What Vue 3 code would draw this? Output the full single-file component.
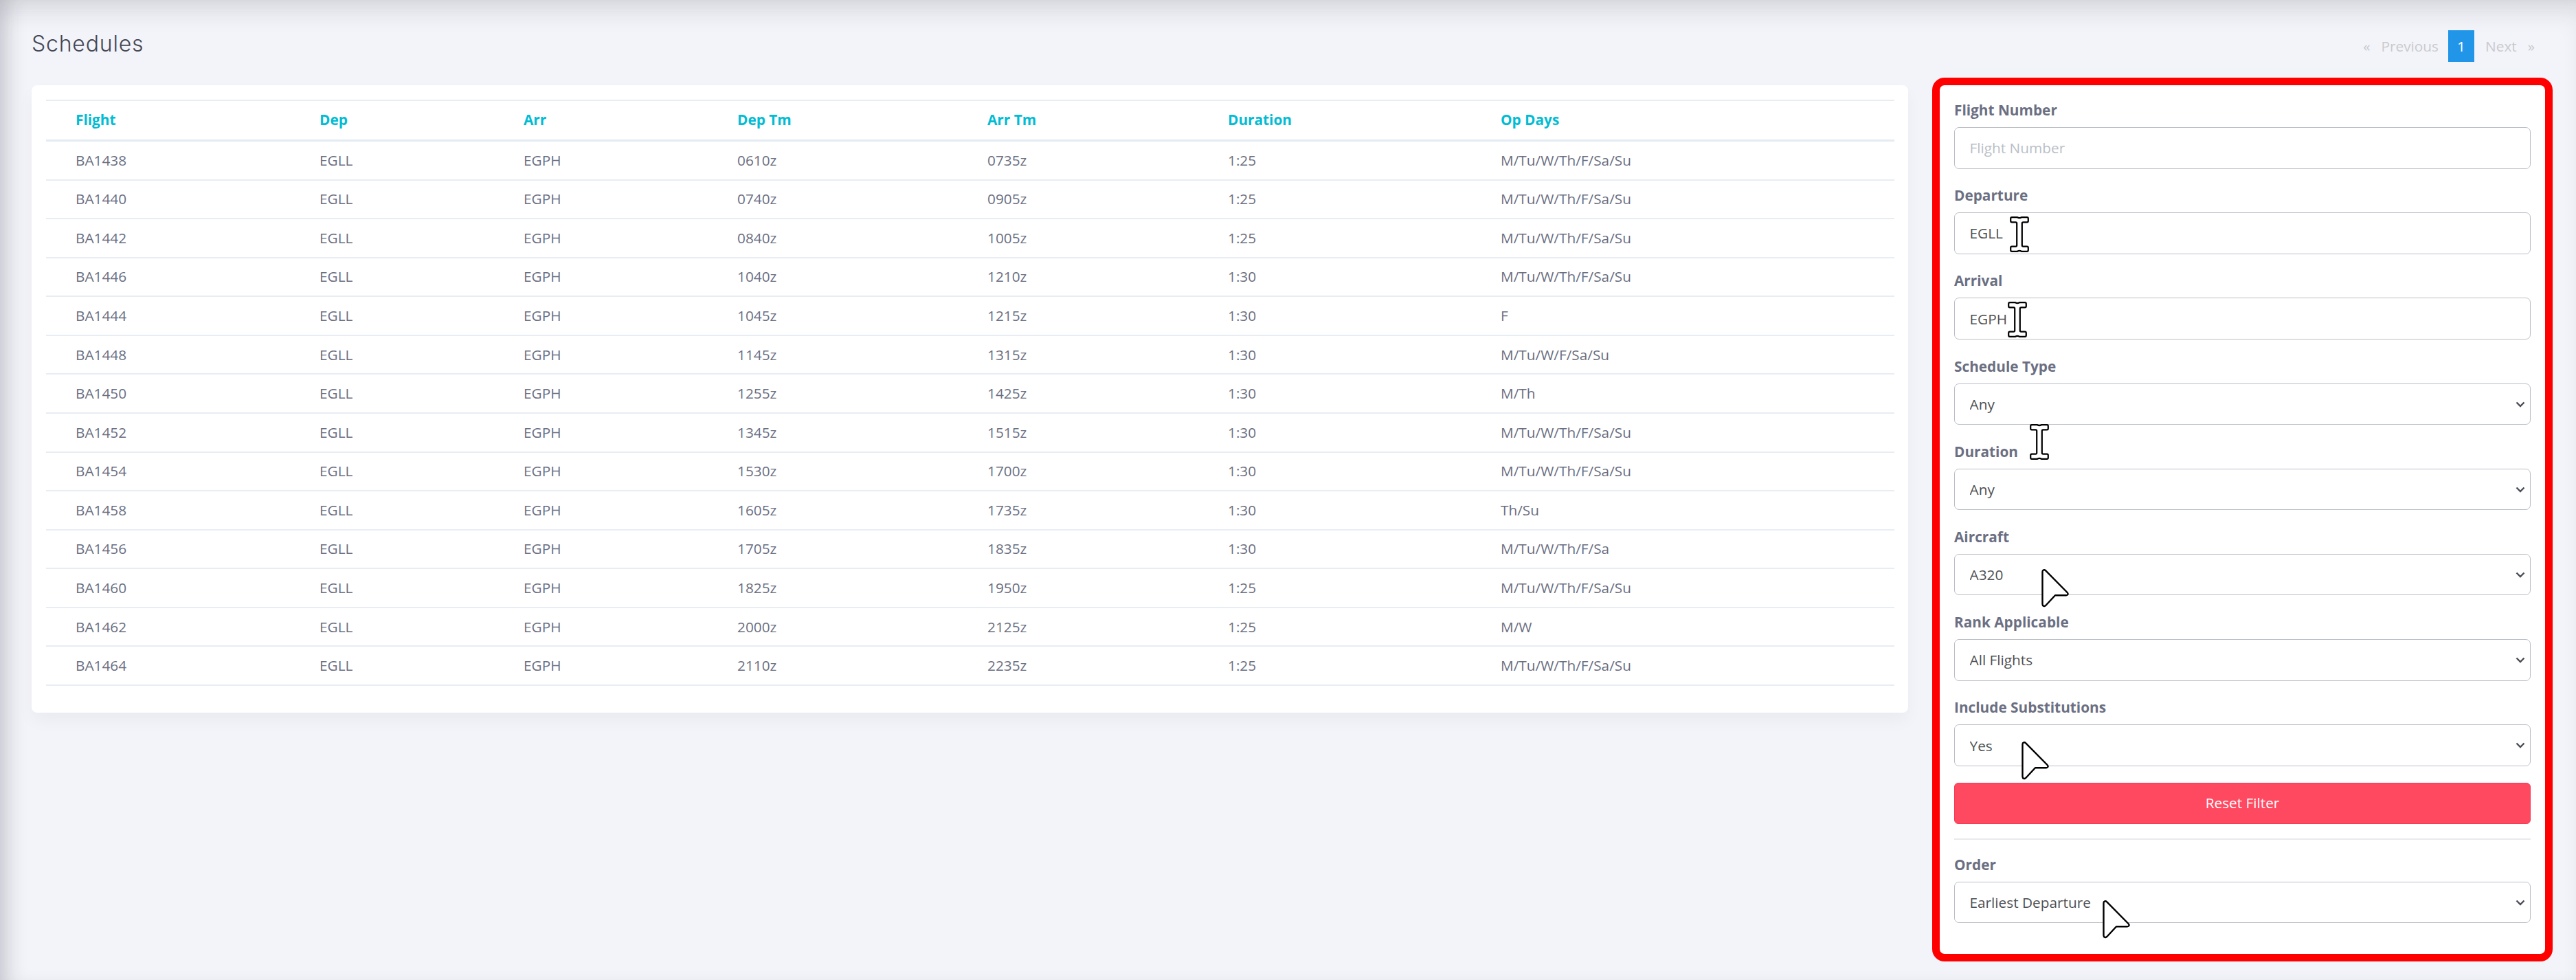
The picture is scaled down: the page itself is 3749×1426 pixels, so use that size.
<template>
  <div class="page">
    <div class="page-header">
      <h3 class="title">Schedules</h3>
      <div class="pagination">
        <span class="page-link prev"><span>«</span><span>Previous</span></span>
        <span class="page-num">1</span>
        <span class="page-link next"><span>Next</span><span>»</span></span>
      </div>
    </div>

    <div class="content">
      <div class="table-card">
        <table class="schedule-table">
          <colgroup>
            <col v-for="w in colWidths" :key="w" :width="w" />
          </colgroup>
          <thead>
            <tr>
              <th v-for="h in headers" :key="h">{{ h }}</th>
            </tr>
          </thead>
          <tbody>
            <tr v-for="row in schedules" :key="row[0]">
              <td>{{ row[0] }}</td>
              <td>EGLL</td>
              <td>EGPH</td>
              <td>{{ row[1] }}</td>
              <td>{{ row[2] }}</td>
              <td>{{ row[3] }}</td>
              <td>{{ row[4] }}</td>
            </tr>
          </tbody>
        </table>
      </div>

      <div class="filter-card">
        <div v-for="f in filters" :key="f.label" class="field">
          <label>{{ f.label }}</label>
          <input v-if="f.type === 'input'" class="control" :value="f.value" :placeholder="f.placeholder" />
          <div v-else class="select-wrap">
            <select class="control">
              <option>{{ f.value }}</option>
            </select>
            <svg class="chevron" width="14" height="9" viewBox="0 0 14 9">
              <path d="M1.5 1.5 L7 7 L12.5 1.5" fill="none" stroke="#4a4d55" stroke-width="2.4" />
            </svg>
          </div>
        </div>

        <button class="reset-btn">Reset Filter</button>
        <div class="divider"></div>

        <div class="field last">
          <label>Order</label>
          <div class="select-wrap">
            <select class="control">
              <option>Earliest Departure</option>
            </select>
            <svg class="chevron" width="14" height="9" viewBox="0 0 14 9">
              <path d="M1.5 1.5 L7 7 L12.5 1.5" fill="none" stroke="#4a4d55" stroke-width="2.4" />
            </svg>
          </div>
        </div>
      </div>
    </div>

    <!-- mouse cursors caught in the capture -->
    <svg
      v-for="c in beams"
      :key="c.y"
      class="cursor"
      :style="{ left: c.x + 'px', top: c.y + 'px' }"
      width="28"
      height="52"
      viewBox="0 0 28 52"
    >
      <path
        d="M3 1.2 H11 Q14 3 17 1.2 H25 Q26.8 1.2 26.8 3 V6.5 Q26.8 8.3 25 8.3 H19.5 Q17.8 8.3 17.8 10 V42 Q17.8 43.7 19.5 43.7 H25 Q26.8 43.7 26.8 45.5 V49 Q26.8 50.8 25 50.8 H17 Q14 49 11 50.8 H3 Q1.2 50.8 1.2 49 V45.5 Q1.2 43.7 3 43.7 H8.5 Q10.2 43.7 10.2 42 V10 Q10.2 8.3 8.5 8.3 H3 Q1.2 8.3 1.2 6.5 V3 Q1.2 1.2 3 1.2 Z"
        fill="#fff"
        stroke="#000"
        stroke-width="2.2"
      />
    </svg>
    <svg
      v-for="c in arrows"
      :key="c.y"
      class="cursor"
      :style="{ left: c.x + 'px', top: c.y + 'px' }"
      width="40"
      height="56"
      viewBox="0 0 40 56"
    >
      <path
        d="M1.5 4 C1.5 1.2 4.5 0.6 6 2.2 L37.5 34 C39.5 36 38.4 38.2 36 38.2 L20 38.2 L6.5 52.8 C4.6 54.8 1.5 54 1.5 51 Z"
        fill="#fff"
        stroke="#000"
        stroke-width="2.4"
        stroke-linejoin="round"
      />
    </svg>
  </div>
</template>

<script setup>
const colWidths = [355, 297, 311, 364, 350, 397, 616];
const headers = ['Flight', 'Dep', 'Arr', 'Dep Tm', 'Arr Tm', 'Duration', 'Op Days'];

const allDays = 'M/Tu/W/Th/F/Sa/Su';
const schedules = [
  ['BA1438', '0610z', '0735z', '1:25', allDays],
  ['BA1440', '0740z', '0905z', '1:25', allDays],
  ['BA1442', '0840z', '1005z', '1:25', allDays],
  ['BA1446', '1040z', '1210z', '1:30', allDays],
  ['BA1444', '1045z', '1215z', '1:30', 'F'],
  ['BA1448', '1145z', '1315z', '1:30', 'M/Tu/W/F/Sa/Su'],
  ['BA1450', '1255z', '1425z', '1:30', 'M/Th'],
  ['BA1452', '1345z', '1515z', '1:30', allDays],
  ['BA1454', '1530z', '1700z', '1:30', allDays],
  ['BA1458', '1605z', '1735z', '1:30', 'Th/Su'],
  ['BA1456', '1705z', '1835z', '1:30', 'M/Tu/W/Th/F/Sa'],
  ['BA1460', '1825z', '1950z', '1:25', allDays],
  ['BA1462', '2000z', '2125z', '1:25', 'M/W'],
  ['BA1464', '2110z', '2235z', '1:25', allDays],
];

const filters = [
  { label: 'Flight Number', type: 'input', value: '', placeholder: 'Flight Number' },
  { label: 'Departure', type: 'input', value: 'EGLL' },
  { label: 'Arrival', type: 'input', value: 'EGPH' },
  { label: 'Schedule Type', type: 'select', value: 'Any' },
  { label: 'Duration', type: 'select', value: 'Any' },
  { label: 'Aircraft', type: 'select', value: 'A320' },
  { label: 'Rank Applicable', type: 'select', value: 'All Flights' },
  { label: 'Include Substitutions', type: 'select', value: 'Yes' },
];

const beams = [
  { x: 2925, y: 315 },
  { x: 2922, y: 439 },
  { x: 2954, y: 617 },
];
const arrows = [
  { x: 2971, y: 828 },
  { x: 2942, y: 1079 },
  { x: 3060, y: 1310 },
];
</script>

<style>
html,
body {
  margin: 0;
  background: #f3f4f9;
}
</style>

<style scoped>
.page {
  position: relative;
  box-sizing: border-box;
  min-height: 1426px;
  padding: 44px 45px 38px 46px;
  background: #f3f4f9;
  font-family: "Open Sans", "Liberation Sans", sans-serif;
  font-size: 20.8px;
  color: #6b6f82;
  overflow: hidden;
  box-shadow: inset 26px 0 28px -14px rgba(30, 30, 50, 0.17), inset 0 30px 34px -14px rgba(30, 30, 50, 0.12);
}

.page-header {
  display: flex;
  justify-content: space-between;
  align-items: flex-start;
  height: 46px;
  margin-bottom: 34px;
}

.title {
  margin: 0;
  font-family: Inter, "Open Sans", sans-serif;
  font-weight: 300;
  font-size: 32px;
  line-height: 40px;
  letter-spacing: 0.8px;
  color: #464855;
}

.pagination {
  display: flex;
  align-items: stretch;
  height: 46px;
  color: #c9cacd;
}

.page-link {
  display: flex;
  align-items: center;
  gap: 16px;
}

.page-link.prev {
  padding: 0 14px;
}

.page-link.next {
  padding: 0 15px 0 16px;
}

.page-num {
  display: flex;
  align-items: center;
  justify-content: center;
  width: 38px;
  background: #2196e9;
  color: #fff;
}

.content {
  display: grid;
  grid-template-columns: 1fr 881px;
  gap: 46px;
  align-items: start;
}

.table-card {
  padding: 21px 20px 39px 21px;
  background: #fff;
  border-radius: 8px;
  box-shadow: 0 12px 24px rgba(30, 30, 60, 0.04);
}

.schedule-table {
  width: 100%;
  table-layout: fixed;
  border-collapse: collapse;
}

.schedule-table th {
  height: 54px;
  padding: 0 0 2px 43px;
  text-align: left;
  font-weight: 700;
  color: #00bcd4;
  border-top: 2px solid #e8edf4;
  border-bottom: 3px solid #e3ebf3;
}

.schedule-table td {
  height: 53.57px;
  padding: 0 0 1px 43px;
  border-bottom: 2px solid #e8edf4;
}

.filter-card {
  padding: 21px;
  background: #fff;
  border-radius: 7px;
  outline: 11px solid #ff0000;
}

.field {
  margin-bottom: 23.7px;
}

.field.last {
  margin-bottom: 0;
  padding-bottom: 23.8px;
}

.field label {
  display: block;
  margin-bottom: 10px;
  font-weight: 700;
  line-height: 30px;
  color: #6b6f82;
}

.control {
  display: block;
  box-sizing: border-box;
  width: 100%;
  height: 60.5px;
  padding: 0 21.5px;
  border: 1px solid #babfc7;
  border-radius: 7px;
  background: #fff;
  font: inherit;
  color: #4e5154;
  outline: none;
  appearance: none;
}

.control::placeholder {
  color: #babfc7;
  opacity: 1;
}

.select-wrap {
  position: relative;
}

.chevron {
  position: absolute;
  right: 8px;
  top: 26px;
  pointer-events: none;
}

.reset-btn {
  display: block;
  box-sizing: border-box;
  width: 100%;
  height: 60px;
  padding: 0 0 2px;
  border: 1px solid #f73a53;
  border-radius: 6px;
  background: #ff4961;
  font: inherit;
  color: #fff;
}

.divider {
  height: 2px;
  margin: 21px 0 21px;
  background: #e8eaed;
}

.cursor {
  position: absolute;
}
</style>
